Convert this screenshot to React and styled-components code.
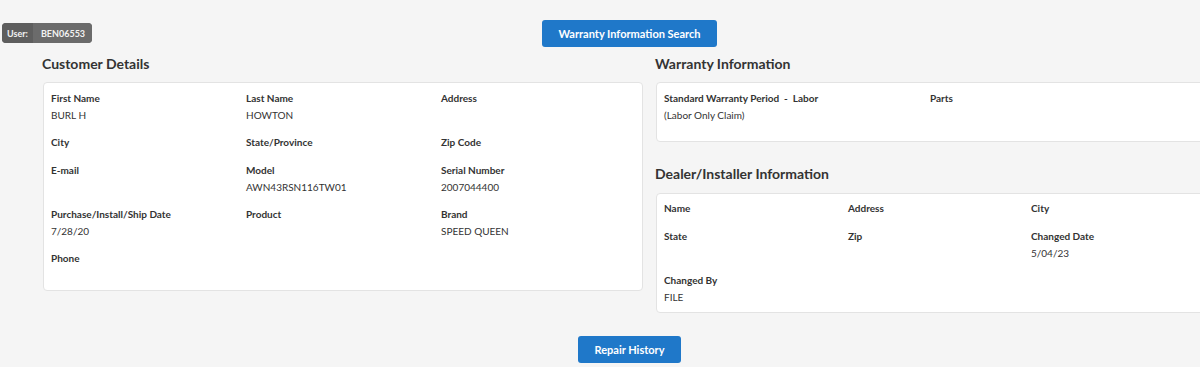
import React from "react";
import styled, { createGlobalStyle } from "styled-components";

const Global = createGlobalStyle`
  html, body { margin: 0; padding: 0; background: #f5f5f5; overflow: hidden; }
  body { font-family: Lato, "Open Sans", "Liberation Sans", sans-serif; color: #333; }
`;

const Page = styled.div`
  position: relative;
  width: 1259px;
  padding-top: 20px;
  background: #f5f5f5;
  min-height: 367px;
  box-sizing: border-box;
`;

const UserBadge = styled.div`
  position: absolute;
  left: 2px;
  top: 23px;
  height: 20px;
  display: flex;
  align-items: stretch;
  border-radius: 4px;
  overflow: hidden;
  font-size: 9px;
  font-weight: 700;
  color: #f2f2f2;
  background: #6b6b6b;
`;

const BadgePart = styled.span`
  display: flex;
  align-items: center;
  padding: 0 ${(p) => (p.$first ? "5px" : "7px")} 0 ${(p) => (p.$first ? "5px" : "8px")};
  background: ${(p) => (p.$first ? "#5e5e5e" : "#6b6b6b")};
`;

const ButtonRow = styled.div`
  display: flex;
  justify-content: center;
`;

const Button = styled.button`
  height: 27px;
  padding: 0 ${(p) => p.$pad || "16px"};
  border: none;
  border-radius: 3px;
  background: #1f78c9;
  color: #fff;
  font-family: Lato, "Liberation Sans", sans-serif;
  font-size: 11px;
  font-weight: 700;
  cursor: pointer;
`;

const Columns = styled.div`
  display: grid;
  grid-template-columns: 600px 567px;
  column-gap: 13px;
  margin: 7px 0 0 43px;
  align-items: start;
`;

const Column = styled.div`
  display: flex;
  flex-direction: column;
`;

const Heading = styled.h2`
  margin: ${(p) => p.$top || "0"} 0 ${(p) => p.$bottom || "8px"} -1px;
  font-size: 14px;
  line-height: 20px;
  font-weight: 700;
  color: #333;
`;

const Card = styled.div`
  background: #fff;
  border: 1px solid #e3e3e3;
  border-radius: 4px;
  padding: ${(p) => p.$pt || "6px"} 8px ${(p) => p.$pb || "4px"} 7px;
  display: grid;
  grid-template-columns: ${(p) => p.$cols};
  align-items: start;
`;

const Field = styled.div`
  display: flex;
  flex-direction: column;
  margin-bottom: ${(p) => p.$mb ?? 10}px;
`;

const Label = styled.div`
  font-size: 10px;
  line-height: 18px;
  font-weight: 700;
  color: #333;
  white-space: nowrap;
`;

const Value = styled.div`
  font-size: 10px;
  line-height: 16px;
  color: #333;
  white-space: nowrap;
`;

const Footer = styled(ButtonRow)`
  margin-top: 23px;
`;

const customer = [
  ["First Name", "BURL H"],
  ["Last Name", "HOWTON"],
  ["Address", ""],
  ["City", ""],
  ["State/Province", ""],
  ["Zip Code", ""],
  ["E-mail", ""],
  ["Model", "AWN43RSN116TW01"],
  ["Serial Number", "2007044400"],
  ["Purchase/Install/Ship Date", "7/28/20"],
  ["Product", ""],
  ["Brand", "SPEED QUEEN"],
  ["Phone", ""],
];

const dealer = [
  ["Name", ""],
  ["Address", ""],
  ["City", ""],
  ["State", ""],
  ["Zip", ""],
  ["Changed Date", "5/04/23"],
  ["Changed By", "FILE"],
];

const renderFields = (list, lastMb) =>
  list.map(([l, v], i) => (
    <Field key={l + i} $mb={i === list.length - 1 ? lastMb : undefined}>
      <Label>{l}</Label>
      {v && <Value>{v}</Value>}
    </Field>
  ));

export default function App() {
  return (
    <>
      <Global />
      <Page>
        <UserBadge>
          <BadgePart $first>User:</BadgePart>
          <BadgePart>BEN06553</BadgePart>
        </UserBadge>
        <ButtonRow>
          <Button $pad="16px">Warranty Information Search</Button>
        </ButtonRow>
        <Columns>
          <Column>
            <Heading>Customer Details</Heading>
            <Card $cols="195px 195px 1fr" $pb="4px">
              {renderFields(customer, 19)}
            </Card>
          </Column>
          <Column>
            <Heading>Warranty Information</Heading>
            <Card $cols="266px 1fr" $pb="8px">
              <Field>
                <Label>Standard Warranty Period&nbsp; - &nbsp;Labor</Label>
                <Value>(Labor Only Claim)</Value>
              </Field>
              <Field>
                <Label>Parts</Label>
              </Field>
            </Card>
            <Heading $top="22px" $bottom="9px">Dealer/Installer Information</Heading>
            <Card $cols="184px 183px 1fr" $pt="5px" $pb="7px">
              {renderFields(dealer, 0)}
            </Card>
          </Column>
        </Columns>
        <Footer>
          <Button $pad="16px">Repair History</Button>
        </Footer>
      </Page>
    </>
  );
}
